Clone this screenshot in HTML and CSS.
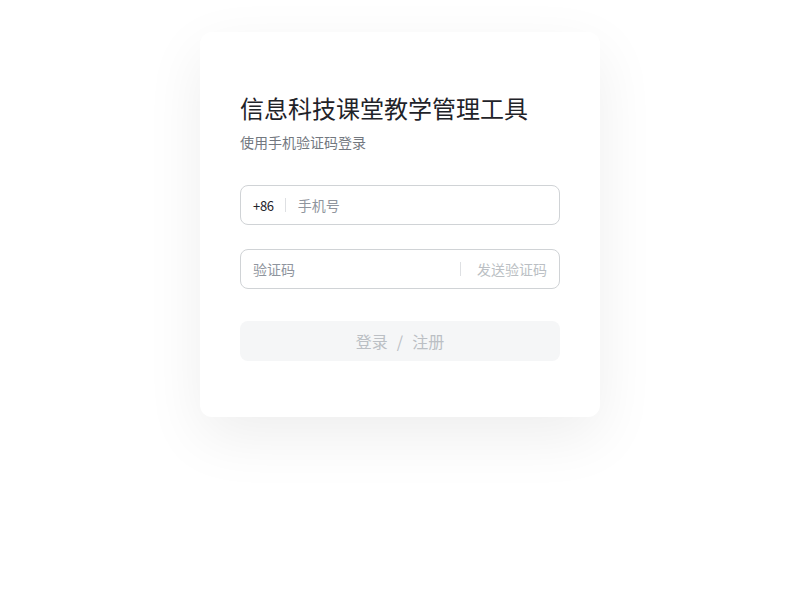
FILE: index.html
```html
<!DOCTYPE html>
<html lang="zh-CN">
<head>
<meta charset="utf-8">
<title>信息科技课堂教学管理工具</title>
<link rel="stylesheet" href="styles.css">
</head>
<body>
<div class="page">
  <div class="card">
    <h1 class="title">信息科技课堂教学管理工具</h1>
    <p class="subtitle">使用手机验证码登录</p>
    <div class="field">
      <span class="prefix">+86</span>
      <span class="sep"></span>
      <span class="placeholder">手机号</span>
    </div>
    <div class="field field-code">
      <span class="placeholder grow">验证码</span>
      <span class="sep"></span>
      <span class="send">发送验证码</span>
    </div>
    <div class="btn">
      <span>登录</span><span class="slash">/</span><span>注册</span>
    </div>
  </div>
</div>
</body>
</html>
```
FILE: styles.css
```css
html, body {
  margin: 0;
  padding: 0;
  background: #ffffff;
  font-family: "Noto Sans CJK SC", "Noto Sans", sans-serif;
}
.page {
  display: flex;
  justify-content: center;
  align-items: flex-start;
  box-sizing: border-box;
  min-height: 600px;
  padding-top: 32px;
}
.card {
  width: 320px;
  padding: 60px 40px 56px;
  background: #ffffff;
  border-radius: 12px;
  box-shadow: 0 20px 60px rgba(0, 0, 0, 0.07);
}
.title {
  margin: 0;
  font-size: 24px;
  line-height: 32px;
  font-weight: 400;
  color: #1f2329;
}
.subtitle {
  margin: 7px 0 0;
  font-size: 14px;
  line-height: 22px;
  color: #73787f;
}
.field {
  display: flex;
  align-items: center;
  height: 38px;
  margin-top: 32px;
  padding: 0 12px;
  border: 1px solid #d0d3d6;
  border-radius: 8px;
  font-size: 14px;
}
.field-code {
  margin-top: 24px;
}
.prefix {
  font-size: 13px;
  color: #1f2329;
  letter-spacing: -0.3px;
}
.sep {
  width: 1px;
  height: 14px;
  background: #dee0e3;
  margin: 0 12px 0 11px;
}
.placeholder {
  color: #8f959e;
}
.grow {
  flex: 1;
}
.field-code .sep {
  margin: 0 16px 0 0;
}
.send {
  color: #bbbfc4;
}
.btn {
  display: flex;
  justify-content: center;
  align-items: center;
  height: 40px;
  margin-top: 32px;
  border-radius: 8px;
  background: #f5f6f7;
  color: #bbbfc4;
  font-size: 16px;
}
.slash {
  margin: 0 9px;
}
```
